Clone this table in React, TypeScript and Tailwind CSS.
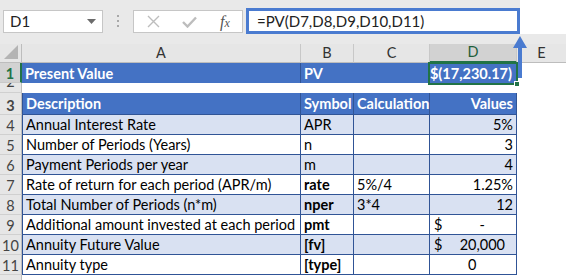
import React from "react";

type Line = {
  n: number;
  a: string;
  b: string;
  bBold?: boolean;
  c?: string;
  d: React.ReactNode;
  band: boolean;
};

const lines: Line[] = [
  { n: 4, a: "Annual Interest Rate", b: "APR", d: "5%", band: true },
  { n: 5, a: "Number of Periods (Years)", b: "n", d: "3", band: false },
  { n: 6, a: "Payment Periods per year", b: "m", d: "4", band: true },
  { n: 7, a: "Rate of return for each period (APR/m)", b: "rate", bBold: true, c: "5%/4", d: "1.25%", band: false },
  { n: 8, a: "Total Number of Periods (n*m)", b: "nper", bBold: true, c: "3*4", d: "12", band: true },
  {
    n: 9,
    a: "Additional amount invested at each period",
    b: "pmt",
    bBold: true,
    d: (
      <span className="flex w-full justify-between pl-[4px] pr-[28px]">
        <span>$</span>
        <span>-</span>
      </span>
    ),
    band: false,
  },
  {
    n: 10,
    a: "Annuity Future Value",
    b: "[fv]",
    bBold: true,
    d: (
      <span className="flex w-full justify-between pl-[4px] pr-[8px]">
        <span>$</span>
        <span>20,000</span>
      </span>
    ),
    band: true,
  },
  {
    n: 11,
    a: "Annuity type",
    b: "[type]",
    bBold: true,
    d: <span className="w-full pl-[38px]">0</span>,
    band: false,
  },
];

function RowHead({ n, sel }: { n?: number; sel?: boolean }) {
  return (
    <div
      className={
        sel
          ? "w-[22px] shrink-0 flex items-end justify-center bg-[#d2d2d2] text-[#217346] border-r-2 border-r-[#217346] border-b border-b-[#c8c8c8] pb-[1px] overflow-hidden"
          : "w-[22px] shrink-0 flex items-end justify-center bg-[#e6e6e6] text-[#444] border-r border-r-[#bdbdbd] border-b border-b-[#d0d0d0] pb-[1px] overflow-hidden"
      }
    >
      {n}
    </div>
  );
}

export default function App() {
  return (
    <div
      className="relative w-[566px] h-[280px] overflow-hidden bg-white text-[14.5px] leading-none text-black"
      style={{ fontFamily: "Lato, 'Liberation Sans', sans-serif" }}
    >
      {/* toolbar */}
      <div className="flex h-[44px] bg-[#e9e9e9]">
        <div className="mt-[10px] ml-[3px] w-[100px] h-[23px] bg-white border border-[#c6c6c6] flex items-center justify-between pl-[6px] pr-[6px]">
          <span className="text-[15px] text-[#222]">D1</span>
          <svg width="9" height="5" viewBox="0 0 9 5">
            <path d="M0 0 L9 0 L4.5 5 Z" fill="#6b6b6b" />
          </svg>
        </div>
        <div className="mt-[15px] ml-[14px] flex flex-col gap-[3px]">
          <span className="w-[2px] h-[2px] bg-[#a8a8a8]" />
          <span className="w-[2px] h-[2px] bg-[#a8a8a8]" />
          <span className="w-[2px] h-[2px] bg-[#a8a8a8]" />
        </div>
        <div className="mt-[10px] ml-[14px] w-[110px] h-[23px] bg-white border border-[#c6c6c6] flex items-center pl-[13px]">
          <svg width="13" height="13" viewBox="0 0 13 13">
            <path d="M1 1 L12 12 M12 1 L1 12" stroke="#bdbdbd" strokeWidth="1.4" />
          </svg>
          <svg className="ml-[22px]" width="15" height="12" viewBox="0 0 15 12">
            <path d="M1 6 L5.5 10.5 L14 1.5" stroke="#bdbdbd" strokeWidth="2.4" fill="none" />
          </svg>
          <span
            className="ml-[23px] text-[16px] italic text-[#555]"
            style={{ fontFamily: "'Liberation Serif', serif" }}
          >
            f<span className="text-[12px]">x</span>
          </span>
        </div>
        <div className="mt-[8px] ml-[3px] w-[274px] h-[26px] bg-white border-[3px] border-[#4a7bd0] flex items-center pl-[8px] text-[15px] text-[#222]">
          =PV(D7,D8,D9,D10,D11)
        </div>
        <div className="flex-1 h-[34px] bg-white" />
      </div>

      {/* column headers */}
      <div className="flex h-[19px] text-[#333]">
        <div className="w-[22px] shrink-0 bg-[#e6e6e6] border-r border-[#bdbdbd] border-b flex items-end justify-end p-[3px]">
          <svg width="14" height="14" viewBox="0 0 14 14">
            <path d="M14 0 L14 14 L0 14 Z" fill="#b4b4b4" />
          </svg>
        </div>
        <div className="w-[279px] shrink-0 bg-[#e6e6e6] border-r border-r-[#c8c8c8] border-b border-b-[#bdbdbd] flex items-center justify-center">A</div>
        <div className="w-[53px] shrink-0 bg-[#e6e6e6] border-r border-r-[#c8c8c8] border-b border-b-[#bdbdbd] flex items-center justify-center">B</div>
        <div className="w-[76px] shrink-0 bg-[#e6e6e6] border-r border-r-[#c8c8c8] border-b border-b-[#bdbdbd] flex items-center justify-center">C</div>
        <div className="w-[87px] shrink-0 bg-[#d2d2d2] border-r border-r-[#c8c8c8] border-b-2 border-b-[#217346] flex items-center justify-center text-[#1e5e3a]">D</div>
        <div className="flex-1 bg-[#e6e6e6] border-b border-b-[#bdbdbd] flex items-center justify-center">E</div>
      </div>

      {/* row 1 */}
      <div className="flex h-[20px] font-bold text-white">
        <RowHead n={1} sel />
        <div className="w-[279px] shrink-0 bg-[#4472c4] border-r border-[#305496] flex items-end pl-[3px] pb-[2px]">Present Value</div>
        <div className="w-[53px] shrink-0 bg-[#4472c4] flex items-end pl-[3px] pb-[2px]">PV</div>
        <div className="w-[76px] shrink-0 bg-[#4472c4]" />
        <div className="w-[87px] shrink-0 bg-[#4472c4] flex items-end justify-end pr-[5px] pb-[2px]">$(17,230.17)</div>
        <div className="flex-1 bg-white" />
      </div>

      {/* row 2 */}
      <div className="flex h-[10px]">
        <div className="w-[22px] shrink-0 flex items-start justify-center bg-[#e6e6e6] text-[#444] border-r border-r-[#bdbdbd] border-b border-b-[#d0d0d0] overflow-hidden">
          <span className="-mt-[8px]">2</span>
        </div>
        <div className="flex-1 bg-white" />
      </div>

      {/* row 3 header */}
      <div className="flex h-[22px] font-bold text-white">
        <RowHead n={3} />
        <div className="w-[279px] shrink-0 bg-[#4472c4] border-l border-r border-b border-[#305496] flex items-end pl-[3px] pb-[3px]">Description</div>
        <div className="w-[53px] shrink-0 bg-[#4472c4] border-r border-b border-[#305496] flex items-end pl-[3px] pb-[3px]">Symbol</div>
        <div className="w-[76px] shrink-0 bg-[#4472c4] border-r border-b border-[#305496] flex items-end pl-[3px] pb-[3px]">Calculation</div>
        <div className="w-[87px] shrink-0 bg-[#4472c4] border-r border-b border-[#305496] flex items-end justify-end pr-[3px] pb-[3px]">Values</div>
        <div className="flex-1 bg-white" />
      </div>

      {lines.map((l) => (
        <div key={l.n} className="flex h-[20px]">
          <RowHead n={l.n} />
          <div
            className={`w-[279px] shrink-0 border-l border-r border-b border-[#305496] flex items-end pl-[3px] pb-[2px] overflow-hidden whitespace-nowrap ${
              l.band ? "bg-[#d9e1f2]" : "bg-white"
            }`}
          >
            {l.a}
          </div>
          <div
            className={`w-[53px] shrink-0 border-r border-b border-[#305496] flex items-end pl-[3px] pb-[2px] ${
              l.band ? "bg-[#d9e1f2]" : "bg-white"
            } ${l.bBold ? "font-bold" : ""}`}
          >
            {l.b}
          </div>
          <div
            className={`w-[76px] shrink-0 border-r border-b border-[#305496] flex items-end pl-[3px] pb-[2px] ${
              l.band ? "bg-[#d9e1f2]" : "bg-white"
            }`}
          >
            {l.c}
          </div>
          <div
            className={`w-[87px] shrink-0 border-r border-b border-[#305496] flex items-end justify-end pr-[3px] pb-[2px] ${
              l.band ? "bg-[#d9e1f2]" : "bg-white"
            }`}
          >
            {l.d}
          </div>
          <div className="flex-1 bg-white" />
        </div>
      ))}

      {/* row 12 */}
      <div className="flex h-[10px]">
        <RowHead />
        <div className="flex-1 bg-white" />
      </div>

      {/* D1 selection */}
      <div className="absolute left-[428px] top-[62px] w-[90px] h-[23px] border-2 border-[#217346]" />
      <div className="absolute left-[514px] top-[81px] w-[6px] h-[6px] bg-[#217346] border border-white" />

      {/* annotation arrow */}
      <svg className="absolute left-[512px] top-[36px]" width="16" height="44" viewBox="0 0 16 44">
        <path d="M8 0 L15 12 L10 12 L10 42 L6 42 L6 12 L1 12 Z" fill="#4a7bd0" />
      </svg>
    </div>
  );
}
